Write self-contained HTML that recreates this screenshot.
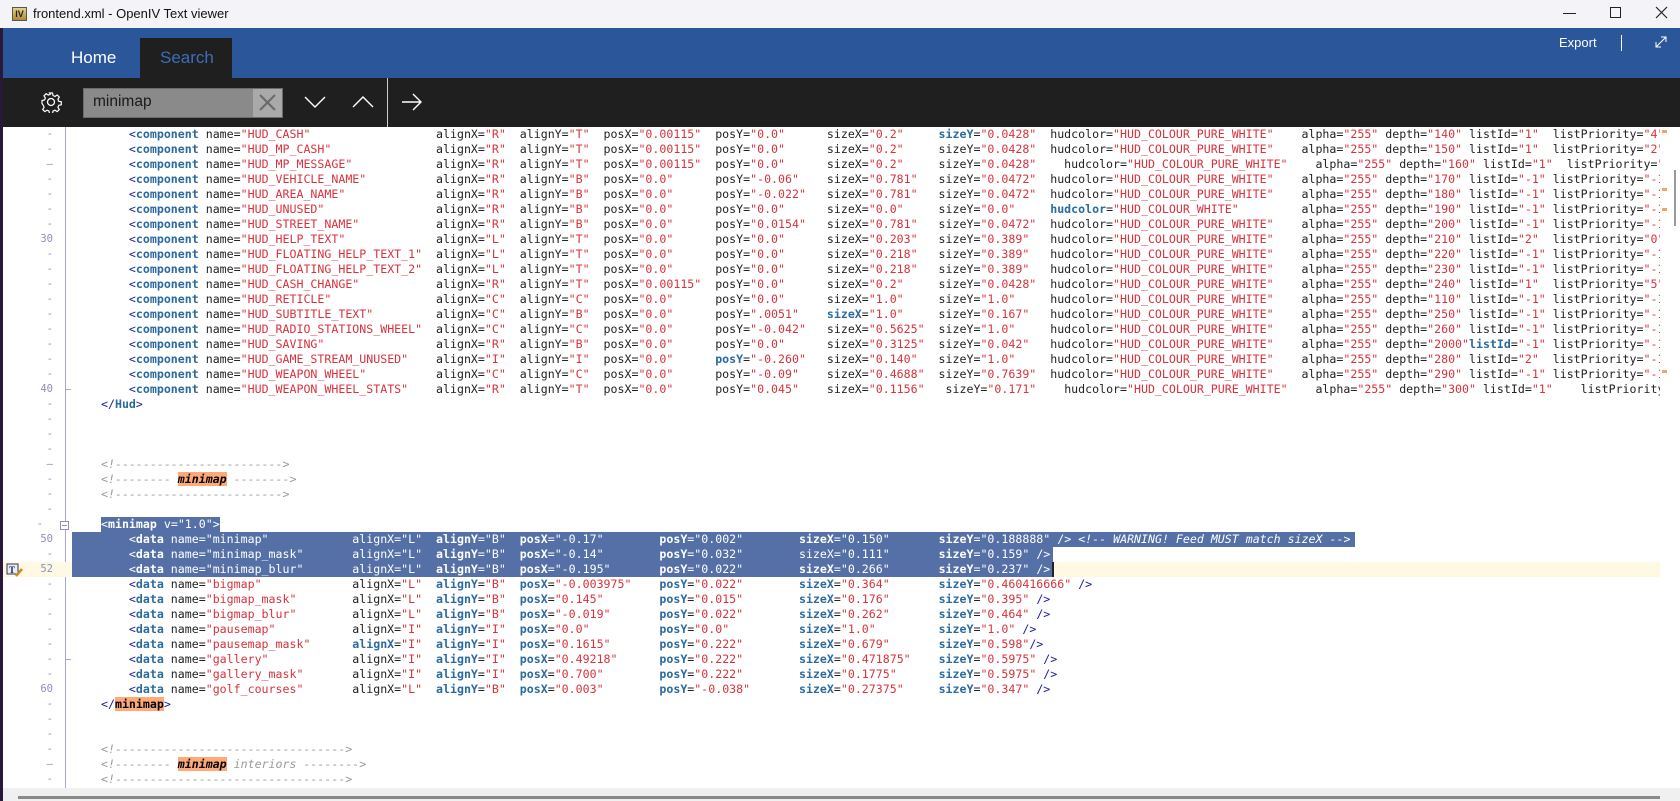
<!DOCTYPE html>
<html><head><meta charset="utf-8">
<style>
*{margin:0;padding:0;box-sizing:border-box}
body{width:1680px;height:801px;overflow:hidden;background:#fff;font-family:"Liberation Sans",sans-serif;position:relative}
#title{position:absolute;left:0;top:0;width:1680px;height:28px;background:#f3f3f8}
#title .txt{position:absolute;left:33px;top:6px;font-size:13px;color:#111}
#ribbon{position:absolute;left:0;top:28px;width:1680px;height:50px;background:#2b579a}
#tool{position:absolute;left:0;top:78px;width:1680px;height:49px;background:#1f1f1f}
#edge{position:absolute;left:0;top:28px;width:3px;height:773px;background:#2a1838}
#code{position:absolute;left:3px;top:127px;width:1657px;height:661px;overflow:hidden;background:#fff;font-family:"DejaVu Sans Mono",monospace;font-size:11.6px}
.r{position:absolute;left:0;height:15px;line-height:15px;width:1657px;white-space:pre}
.g{position:absolute;left:0;width:50px;text-align:right;color:#8d8fbd;font-size:10.5px}
.t{position:absolute;left:98px;color:#222;white-space:pre}
f{display:inline-block;white-space:pre}
.w44{width:44ch}.w12{width:12ch}.w16{width:16ch}.w18{width:18ch}.w17{width:17ch}.w36{width:36ch}.w32{width:32ch}.w20{width:20ch}.w14{width:14ch}.w8{width:8ch}
k{color:#1b1b9c}
e{color:#2a6aa0;font-weight:bold}
v{color:#d8323c}
B{color:#2a6aa0;font-weight:bold}
.cm{color:#9a9a9a;font-style:italic}
.hl{background:#ffa97a;color:#000;font-weight:bold;font-style:italic}
.sel{position:absolute;height:15px;background:#5470a6}
.s, .s k,.s e,.s v,.s B{color:#fff}
#gl{position:absolute;left:62px;top:0;width:1px;height:661px;background:#aaa3d6}
</style></head><body>
<div id="title">
 <div style="position:absolute;left:12px;top:7px;width:15px;height:14px;background:linear-gradient(#e8d08a,#b08a30);border:1px solid #555;font-size:9px;font-weight:bold;line-height:12px;text-align:center;color:#222">IV</div>
 <div class="txt">frontend.xml - OpenIV Text viewer</div>
 <div style="position:absolute;left:1563px;top:13px;width:13px;height:1px;background:#222"></div>
 <div style="position:absolute;left:1610px;top:7px;width:11px;height:11px;border:1px solid #222"></div>
 <svg style="position:absolute;left:1655px;top:6px" width="13" height="13"><path d="M1 1L12 12M12 1L1 12" stroke="#222" stroke-width="1.2"/></svg>
</div>
<div id="ribbon">
 <div style="position:absolute;left:71px;top:20px;font-size:17px;color:#fff">Home</div>
 <div style="position:absolute;left:140px;top:10px;width:92px;height:40px;background:#1f1f1f"></div>
 <div style="position:absolute;left:160px;top:20px;font-size:17px;color:#3a6fb8">Search</div>
 <div style="position:absolute;left:1559px;top:7px;font-size:13px;color:#fff">Export</div>
 <div style="position:absolute;left:1621px;top:7px;width:1px;height:16px;background:#fff"></div>
 <svg style="position:absolute;left:1655px;top:8px" width="12" height="12"><path d="M1 11L11 1M6 1H11V6M1 6V11H6" stroke="#fff" fill="none" stroke-width="1"/></svg>
</div>
<div id="tool">
 <svg style="position:absolute;left:40px;top:13px" width="22" height="22" viewBox="0 0 22 22"><circle cx="11" cy="11" r="3.5" fill="none" stroke="#fff" stroke-width="1.3"/><path d="M9.5 2h3l.5 2.5 2 .9 2.2-1.4 2.1 2.1-1.4 2.2.9 2 2.5.5v3l-2.5.5-.9 2 1.4 2.2-2.1 2.1-2.2-1.4-2 .9-.5 2.5h-3l-.5-2.5-2-.9-2.2 1.4-2.1-2.1 1.4-2.2-.9-2L2 12.5v-3l2.5-.5.9-2L4 4.8 6.1 2.7l2.2 1.4 2-.9z" fill="none" stroke="#fff" stroke-width="1.2"/></svg>
 <div style="position:absolute;left:83px;top:10px;width:200px;height:30px;background:#8a8a8a;border:1px solid #6b6b6b"></div>
 <div style="position:absolute;left:93px;top:15px;font-size:15.5px;color:#1a1a1a">minimap</div>
 <div style="position:absolute;left:253px;top:11px;width:29px;height:28px;background:#a9a9a9"></div>
 <svg style="position:absolute;left:258px;top:15px" width="19" height="19"><path d="M2 2L17 17M17 2L2 17" stroke="#6a6a6a" stroke-width="2.2"/></svg>
 <svg style="position:absolute;left:304px;top:17px" width="22" height="14"><path d="M1 2L11 12L21 2" stroke="#fff" fill="none" stroke-width="1.4"/></svg>
 <svg style="position:absolute;left:352px;top:17px" width="22" height="14"><path d="M1 12L11 2L21 12" stroke="#fff" fill="none" stroke-width="1.4"/></svg>
 <div style="position:absolute;left:387px;top:0;width:1px;height:49px;background:#ccc"></div>
 <svg style="position:absolute;left:401px;top:14px" width="22" height="20"><path d="M1 10H20M12 2L20 10L12 18" stroke="#fff" fill="none" stroke-width="1.4"/></svg>
</div>
<div id="edge"></div>

<div id="code">
<div id="gl"></div>
<div style="position:absolute;left:0;top:435px;width:1657px;height:15px;background:#fff8e3"></div>
<div class="sel" style="left:98px;top:390px;width:119px"></div>
<div class="sel" style="left:69px;top:405px;width:1283px"></div>
<div class="sel" style="left:69px;top:420px;width:981px"></div>
<div class="sel" style="left:69px;top:435px;width:981px"></div>
<div style="position:absolute;left:1049px;top:435px;width:2px;height:15px;background:#222"></div>
<div style="position:absolute;left:57px;top:394px;width:9px;height:9px;border:1px solid #8d8fbd;background:#fff"></div>
<div style="position:absolute;left:59px;top:398px;width:5px;height:1px;background:#8d8fbd"></div>
<div style="position:absolute;left:62px;top:262px;width:6px;height:1px;background:#aaa3d6"></div>
<div style="position:absolute;left:62px;top:532px;width:6px;height:1px;background:#aaa3d6"></div>
<svg style="position:absolute;left:3px;top:436px" width="18" height="14"><rect x="1" y="1" width="11" height="10" fill="#e8eef8" stroke="#335"/><text x="3" y="10" font-size="9" font-family="Liberation Serif" font-weight="bold" fill="#224">T</text><path d="M10 13L16 6" stroke="#d08a20" stroke-width="2.5"/></svg>

<div class="r" style="top:0"><span class="g">-</span><span class="t">    <f class="w44"><k>&lt;</k><e>component</e> name=<v>"HUD_CASH"</v></f><f class="w12">alignX=<v>"R"</v></f><f class="w12">alignY=<v>"T"</v></f><f class="w16">posX=<v>"0.00115"</v></f><f class="w16">posY=<v>"0.0"</v></f><f class="w16">sizeX=<v>"0.2"</v></f><f class="w16"><B>sizeY</B>=<v>"0.0428"</v></f><f class="w36">hudcolor=<v>"HUD_COLOUR_PURE_WHITE"</v></f><f class="w12">alpha=<v>"255"</v></f><f class="w12">depth=<v>"140"</v></f><f class="w12">listId=<v>"1"</v></f>listPriority=<v>"4"</v></span></div>
<div class="r" style="top:15px"><span class="g">-</span><span class="t">    <f class="w44"><k>&lt;</k><e>component</e> name=<v>"HUD_MP_CASH"</v></f><f class="w12">alignX=<v>"R"</v></f><f class="w12">alignY=<v>"T"</v></f><f class="w16">posX=<v>"0.00115"</v></f><f class="w16">posY=<v>"0.0"</v></f><f class="w16">sizeX=<v>"0.2"</v></f><f class="w16">sizeY=<v>"0.0428"</v></f><f class="w36">hudcolor=<v>"HUD_COLOUR_PURE_WHITE"</v></f><f class="w12">alpha=<v>"255"</v></f><f class="w12">depth=<v>"150"</v></f><f class="w12">listId=<v>"1"</v></f>listPriority=<v>"2"</v></span></div>
<div class="r" style="top:30px"><span class="g">–</span><span class="t">    <f class="w44"><k>&lt;</k><e>component</e> name=<v>"HUD_MP_MESSAGE"</v></f><f class="w12">alignX=<v>"R"</v></f><f class="w12">alignY=<v>"T"</v></f><f class="w16">posX=<v>"0.00115"</v></f><f class="w16">posY=<v>"0.0"</v></f><f class="w16">sizeX=<v>"0.2"</v></f><f class="w18">sizeY=<v>"0.0428"</v></f><f class="w36">hudcolor=<v>"HUD_COLOUR_PURE_WHITE"</v></f><f class="w12">alpha=<v>"255"</v></f><f class="w12">depth=<v>"160"</v></f><f class="w12">listId=<v>"1"</v></f>listPriority=<v>"</v></span></div>
<div class="r" style="top:45px"><span class="g">-</span><span class="t">    <f class="w44"><k>&lt;</k><e>component</e> name=<v>"HUD_VEHICLE_NAME"</v></f><f class="w12">alignX=<v>"R"</v></f><f class="w12">alignY=<v>"B"</v></f><f class="w16">posX=<v>"0.0"</v></f><f class="w16">posY=<v>"-0.06"</v></f><f class="w16">sizeX=<v>"0.781"</v></f><f class="w16">sizeY=<v>"0.0472"</v></f><f class="w36">hudcolor=<v>"HUD_COLOUR_PURE_WHITE"</v></f><f class="w12">alpha=<v>"255"</v></f><f class="w12">depth=<v>"170"</v></f><f class="w12">listId=<v>"-1"</v></f>listPriority=<v>"-1"</v></span></div>
<div class="r" style="top:60px"><span class="g">-</span><span class="t">    <f class="w44"><k>&lt;</k><e>component</e> name=<v>"HUD_AREA_NAME"</v></f><f class="w12">alignX=<v>"R"</v></f><f class="w12">alignY=<v>"B"</v></f><f class="w16">posX=<v>"0.0"</v></f><f class="w16">posY=<v>"-0.022"</v></f><f class="w16">sizeX=<v>"0.781"</v></f><f class="w16">sizeY=<v>"0.0472"</v></f><f class="w36">hudcolor=<v>"HUD_COLOUR_PURE_WHITE"</v></f><f class="w12">alpha=<v>"255"</v></f><f class="w12">depth=<v>"180"</v></f><f class="w12">listId=<v>"-1"</v></f>listPriority=<v>"-1"</v></span></div>
<div class="r" style="top:75px"><span class="g">-</span><span class="t">    <f class="w44"><k>&lt;</k><e>component</e> name=<v>"HUD_UNUSED"</v></f><f class="w12">alignX=<v>"R"</v></f><f class="w12">alignY=<v>"B"</v></f><f class="w16">posX=<v>"0.0"</v></f><f class="w16">posY=<v>"0.0"</v></f><f class="w16">sizeX=<v>"0.0"</v></f><f class="w16">sizeY=<v>"0.0"</v></f><f class="w36"><B>hudcolor</B>=<v>"HUD_COLOUR_WHITE"</v></f><f class="w12">alpha=<v>"255"</v></f><f class="w12">depth=<v>"190"</v></f><f class="w12">listId=<v>"-1"</v></f>listPriority=<v>"-1"</v></span></div>
<div class="r" style="top:90px"><span class="g">-</span><span class="t">    <f class="w44"><k>&lt;</k><e>component</e> name=<v>"HUD_STREET_NAME"</v></f><f class="w12">alignX=<v>"R"</v></f><f class="w12">alignY=<v>"B"</v></f><f class="w16">posX=<v>"0.0"</v></f><f class="w16">posY=<v>"0.0154"</v></f><f class="w16">sizeX=<v>"0.781"</v></f><f class="w16">sizeY=<v>"0.0472"</v></f><f class="w36">hudcolor=<v>"HUD_COLOUR_PURE_WHITE"</v></f><f class="w12">alpha=<v>"255"</v></f><f class="w12">depth=<v>"200"</v></f><f class="w12">listId=<v>"-1"</v></f>listPriority=<v>"-1"</v></span></div>
<div class="r" style="top:105px"><span class="g">30</span><span class="t">    <f class="w44"><k>&lt;</k><e>component</e> name=<v>"HUD_HELP_TEXT"</v></f><f class="w12">alignX=<v>"L"</v></f><f class="w12">alignY=<v>"T"</v></f><f class="w16">posX=<v>"0.0"</v></f><f class="w16">posY=<v>"0.0"</v></f><f class="w16">sizeX=<v>"0.203"</v></f><f class="w16">sizeY=<v>"0.389"</v></f><f class="w36">hudcolor=<v>"HUD_COLOUR_PURE_WHITE"</v></f><f class="w12">alpha=<v>"255"</v></f><f class="w12">depth=<v>"210"</v></f><f class="w12">listId=<v>"2"</v></f>listPriority=<v>"0"</v></span></div>
<div class="r" style="top:120px"><span class="g">-</span><span class="t">    <f class="w44"><k>&lt;</k><e>component</e> name=<v>"HUD_FLOATING_HELP_TEXT_1"</v></f><f class="w12">alignX=<v>"L"</v></f><f class="w12">alignY=<v>"T"</v></f><f class="w16">posX=<v>"0.0"</v></f><f class="w16">posY=<v>"0.0"</v></f><f class="w16">sizeX=<v>"0.218"</v></f><f class="w16">sizeY=<v>"0.389"</v></f><f class="w36">hudcolor=<v>"HUD_COLOUR_PURE_WHITE"</v></f><f class="w12">alpha=<v>"255"</v></f><f class="w12">depth=<v>"220"</v></f><f class="w12">listId=<v>"-1"</v></f>listPriority=<v>"-1"</v></span></div>
<div class="r" style="top:135px"><span class="g">-</span><span class="t">    <f class="w44"><k>&lt;</k><e>component</e> name=<v>"HUD_FLOATING_HELP_TEXT_2"</v></f><f class="w12">alignX=<v>"L"</v></f><f class="w12">alignY=<v>"T"</v></f><f class="w16">posX=<v>"0.0"</v></f><f class="w16">posY=<v>"0.0"</v></f><f class="w16">sizeX=<v>"0.218"</v></f><f class="w16">sizeY=<v>"0.389"</v></f><f class="w36">hudcolor=<v>"HUD_COLOUR_PURE_WHITE"</v></f><f class="w12">alpha=<v>"255"</v></f><f class="w12">depth=<v>"230"</v></f><f class="w12">listId=<v>"-1"</v></f>listPriority=<v>"-1"</v></span></div>
<div class="r" style="top:150px"><span class="g">-</span><span class="t">    <f class="w44"><k>&lt;</k><e>component</e> name=<v>"HUD_CASH_CHANGE"</v></f><f class="w12">alignX=<v>"R"</v></f><f class="w12">alignY=<v>"T"</v></f><f class="w16">posX=<v>"0.00115"</v></f><f class="w16">posY=<v>"0.0"</v></f><f class="w16">sizeX=<v>"0.2"</v></f><f class="w16">sizeY=<v>"0.0428"</v></f><f class="w36">hudcolor=<v>"HUD_COLOUR_PURE_WHITE"</v></f><f class="w12">alpha=<v>"255"</v></f><f class="w12">depth=<v>"240"</v></f><f class="w12">listId=<v>"1"</v></f>listPriority=<v>"5"</v></span></div>
<div class="r" style="top:165px"><span class="g">-</span><span class="t">    <f class="w44"><k>&lt;</k><e>component</e> name=<v>"HUD_RETICLE"</v></f><f class="w12">alignX=<v>"C"</v></f><f class="w12">alignY=<v>"C"</v></f><f class="w16">posX=<v>"0.0"</v></f><f class="w16">posY=<v>"0.0"</v></f><f class="w16">sizeX=<v>"1.0"</v></f><f class="w16">sizeY=<v>"1.0"</v></f><f class="w36">hudcolor=<v>"HUD_COLOUR_PURE_WHITE"</v></f><f class="w12">alpha=<v>"255"</v></f><f class="w12">depth=<v>"110"</v></f><f class="w12">listId=<v>"-1"</v></f>listPriority=<v>"-1"</v></span></div>
<div class="r" style="top:180px"><span class="g">-</span><span class="t">    <f class="w44"><k>&lt;</k><e>component</e> name=<v>"HUD_SUBTITLE_TEXT"</v></f><f class="w12">alignX=<v>"C"</v></f><f class="w12">alignY=<v>"B"</v></f><f class="w16">posX=<v>"0.0"</v></f><f class="w16">posY=<v>".0051"</v></f><f class="w16"><B>sizeX</B>=<v>"1.0"</v></f><f class="w16">sizeY=<v>"0.167"</v></f><f class="w36">hudcolor=<v>"HUD_COLOUR_PURE_WHITE"</v></f><f class="w12">alpha=<v>"255"</v></f><f class="w12">depth=<v>"250"</v></f><f class="w12">listId=<v>"-1"</v></f>listPriority=<v>"-1"</v></span></div>
<div class="r" style="top:195px"><span class="g">-</span><span class="t">    <f class="w44"><k>&lt;</k><e>component</e> name=<v>"HUD_RADIO_STATIONS_WHEEL"</v></f><f class="w12">alignX=<v>"C"</v></f><f class="w12">alignY=<v>"C"</v></f><f class="w16">posX=<v>"0.0"</v></f><f class="w16">posY=<v>"-0.042"</v></f><f class="w16">sizeX=<v>"0.5625"</v></f><f class="w16">sizeY=<v>"1.0"</v></f><f class="w36">hudcolor=<v>"HUD_COLOUR_PURE_WHITE"</v></f><f class="w12">alpha=<v>"255"</v></f><f class="w12">depth=<v>"260"</v></f><f class="w12">listId=<v>"-1"</v></f>listPriority=<v>"-1"</v></span></div>
<div class="r" style="top:210px"><span class="g">-</span><span class="t">    <f class="w44"><k>&lt;</k><e>component</e> name=<v>"HUD_SAVING"</v></f><f class="w12">alignX=<v>"R"</v></f><f class="w12">alignY=<v>"B"</v></f><f class="w16">posX=<v>"0.0"</v></f><f class="w16">posY=<v>"0.0"</v></f><f class="w16">sizeX=<v>"0.3125"</v></f><f class="w16">sizeY=<v>"0.042"</v></f><f class="w36">hudcolor=<v>"HUD_COLOUR_PURE_WHITE"</v></f><f class="w12">alpha=<v>"255"</v></f><f class="w12">depth=<v>"2000"</v></f><f class="w12"><B>listId</B>=<v>"-1"</v></f>listPriority=<v>"-1"</v></span></div>
<div class="r" style="top:225px"><span class="g">-</span><span class="t">    <f class="w44"><k>&lt;</k><e>component</e> name=<v>"HUD_GAME_STREAM_UNUSED"</v></f><f class="w12">alignX=<v>"I"</v></f><f class="w12">alignY=<v>"I"</v></f><f class="w16">posX=<v>"0.0"</v></f><f class="w16"><B>posY</B>=<v>"-0.260"</v></f><f class="w16">sizeX=<v>"0.140"</v></f><f class="w16">sizeY=<v>"1.0"</v></f><f class="w36">hudcolor=<v>"HUD_COLOUR_PURE_WHITE"</v></f><f class="w12">alpha=<v>"255"</v></f><f class="w12">depth=<v>"280"</v></f><f class="w12">listId=<v>"2"</v></f>listPriority=<v>"-1"</v></span></div>
<div class="r" style="top:240px"><span class="g">-</span><span class="t">    <f class="w44"><k>&lt;</k><e>component</e> name=<v>"HUD_WEAPON_WHEEL"</v></f><f class="w12">alignX=<v>"C"</v></f><f class="w12">alignY=<v>"C"</v></f><f class="w16">posX=<v>"0.0"</v></f><f class="w16">posY=<v>"-0.09"</v></f><f class="w16">sizeX=<v>"0.4688"</v></f><f class="w16">sizeY=<v>"0.7639"</v></f><f class="w36">hudcolor=<v>"HUD_COLOUR_PURE_WHITE"</v></f><f class="w12">alpha=<v>"255"</v></f><f class="w12">depth=<v>"290"</v></f><f class="w12">listId=<v>"-1"</v></f>listPriority=<v>"-1"</v></span></div>
<div class="r" style="top:255px"><span class="g">40</span><span class="t">    <f class="w44"><k>&lt;</k><e>component</e> name=<v>"HUD_WEAPON_WHEEL_STATS"</v></f><f class="w12">alignX=<v>"R"</v></f><f class="w12">alignY=<v>"T"</v></f><f class="w16">posX=<v>"0.0"</v></f><f class="w16">posY=<v>"0.045"</v></f><f class="w17">sizeX=<v>"0.1156"</v></f><f class="w17">sizeY=<v>"0.171"</v></f><f class="w36">hudcolor=<v>"HUD_COLOUR_PURE_WHITE"</v></f><f class="w12">alpha=<v>"255"</v></f><f class="w12">depth=<v>"300"</v></f><f class="w14">listId=<v>"1"</v></f>listPriority=<v>"1"</v></span></div>
<div class="r" style="top:270px"><span class="g">-</span><span class="t"><k>&lt;/</k><e>Hud</e><k>&gt;</k></span></div>
<div class="r" style="top:285px"><span class="g">-</span></div>
<div class="r" style="top:300px"><span class="g">-</span></div>
<div class="r" style="top:315px"><span class="g">-</span></div>
<div class="r" style="top:330px"><span class="g">–</span><span class="t cm">&lt;!------------------------&gt;</span></div>
<div class="r" style="top:345px"><span class="g">-</span><span class="t cm">&lt;!-------- <span class="hl">minimap</span> --------&gt;</span></div>
<div class="r" style="top:360px"><span class="g">-</span><span class="t cm">&lt;!------------------------&gt;</span></div>
<div class="r" style="top:375px"><span class="g">-</span></div>
<div class="r" style="top:390px"><span class="g" style="width:40px">-</span><span class="t s"><k>&lt;</k><e>minimap</e> v=<v>"1.0"</v><k>&gt;</k></span></div>
<div class="r" style="top:405px"><span class="g">50</span><span class="t s">    <f class="w32"><k>&lt;</k><e>data</e> name=<v>"minimap"</v></f><f class="w12">alignX=<v>"L"</v></f><f class="w12"><B>alignY</B>=<v>"B"</v></f><f class="w20"><B>posX</B>=<v>"-0.17"</v></f><f class="w20"><B>posY</B>=<v>"0.002"</v></f><f class="w20"><B>sizeX</B>=<v>"0.150"</v></f><B>sizeY</B>=<v>"0.188888"</v> <k>/&gt;</k> <span style="font-style:italic">&lt;!-- WARNING! Feed MUST match sizeX --&gt;</span></span></div>
<div class="r" style="top:420px"><span class="g">-</span><span class="t s">    <f class="w32"><k>&lt;</k><e>data</e> name=<v>"minimap_mask"</v></f><f class="w12">alignX=<v>"L"</v></f><f class="w12"><B>alignY</B>=<v>"B"</v></f><f class="w20"><B>posX</B>=<v>"-0.14"</v></f><f class="w20"><B>posY</B>=<v>"0.032"</v></f><f class="w20">sizeX=<v>"0.111"</v></f><B>sizeY</B>=<v>"0.159"</v> <k>/&gt;</k></span></div>
<div class="r" style="top:435px"><span class="g">52</span><span class="t s">    <f class="w32"><k>&lt;</k><e>data</e> name=<v>"minimap_blur"</v></f><f class="w12">alignX=<v>"L"</v></f><f class="w12"><B>alignY</B>=<v>"B"</v></f><f class="w20"><B>posX</B>=<v>"-0.195"</v></f><f class="w20"><B>posY</B>=<v>"0.022"</v></f><f class="w20"><B>sizeX</B>=<v>"0.266"</v></f><B>sizeY</B>=<v>"0.237"</v> <k>/&gt;</k></span></div>
<div class="r" style="top:450px"><span class="g">-</span><span class="t">    <f class="w32"><k>&lt;</k><e>data</e> name=<v>"bigmap"</v></f><f class="w12">alignX=<v>"L"</v></f><f class="w12"><B>alignY</B>=<v>"B"</v></f><f class="w20"><B>posX</B>=<v>"-0.003975"</v></f><f class="w20"><B>posY</B>=<v>"0.022"</v></f><f class="w20"><B>sizeX</B>=<v>"0.364"</v></f><B>sizeY</B>=<v>"0.460416666"</v> <k>/&gt;</k></span></div>
<div class="r" style="top:465px"><span class="g">-</span><span class="t">    <f class="w32"><k>&lt;</k><e>data</e> name=<v>"bigmap_mask"</v></f><f class="w12">alignX=<v>"L"</v></f><f class="w12"><B>alignY</B>=<v>"B"</v></f><f class="w20"><B>posX</B>=<v>"0.145"</v></f><f class="w20"><B>posY</B>=<v>"0.015"</v></f><f class="w20"><B>sizeX</B>=<v>"0.176"</v></f><B>sizeY</B>=<v>"0.395"</v> <k>/&gt;</k></span></div>
<div class="r" style="top:480px"><span class="g">-</span><span class="t">    <f class="w32"><k>&lt;</k><e>data</e> name=<v>"bigmap_blur"</v></f><f class="w12">alignX=<v>"L"</v></f><f class="w12"><B>alignY</B>=<v>"B"</v></f><f class="w20"><B>posX</B>=<v>"-0.019"</v></f><f class="w20"><B>posY</B>=<v>"0.022"</v></f><f class="w20"><B>sizeX</B>=<v>"0.262"</v></f><B>sizeY</B>=<v>"0.464"</v> <k>/&gt;</k></span></div>
<div class="r" style="top:495px"><span class="g">-</span><span class="t">    <f class="w32"><k>&lt;</k><e>data</e> name=<v>"pausemap"</v></f><f class="w12">alignX=<v>"I"</v></f><f class="w12"><B>alignY</B>=<v>"I"</v></f><f class="w20"><B>posX</B>=<v>"0.0"</v></f><f class="w20"><B>posY</B>=<v>"0.0"</v></f><f class="w20"><B>sizeX</B>=<v>"1.0"</v></f><B>sizeY</B>=<v>"1.0"</v> <k>/&gt;</k></span></div>
<div class="r" style="top:510px"><span class="g">-</span><span class="t">    <f class="w32"><k>&lt;</k><e>data</e> name=<v>"pausemap_mask"</v></f><f class="w12"><B>alignX</B>=<v>"I"</v></f><f class="w12"><B>alignY</B>=<v>"I"</v></f><f class="w20"><B>posX</B>=<v>"0.1615"</v></f><f class="w20"><B>posY</B>=<v>"0.222"</v></f><f class="w20"><B>sizeX</B>=<v>"0.679"</v></f><B>sizeY</B>=<v>"0.598"</v><k>/&gt;</k></span></div>
<div class="r" style="top:525px"><span class="g">-</span><span class="t">    <f class="w32"><k>&lt;</k><e>data</e> name=<v>"gallery"</v></f><f class="w12">alignX=<v>"I"</v></f><f class="w12"><B>alignY</B>=<v>"I"</v></f><f class="w20"><B>posX</B>=<v>"0.49218"</v></f><f class="w20"><B>posY</B>=<v>"0.222"</v></f><f class="w20"><B>sizeX</B>=<v>"0.471875"</v></f><B>sizeY</B>=<v>"0.5975"</v> <k>/&gt;</k></span></div>
<div class="r" style="top:540px"><span class="g">-</span><span class="t">    <f class="w32"><k>&lt;</k><e>data</e> name=<v>"gallery_mask"</v></f><f class="w12">alignX=<v>"I"</v></f><f class="w12"><B>alignY</B>=<v>"I"</v></f><f class="w20"><B>posX</B>=<v>"0.700"</v></f><f class="w20"><B>posY</B>=<v>"0.222"</v></f><f class="w20"><B>sizeX</B>=<v>"0.1775"</v></f><B>sizeY</B>=<v>"0.5975"</v> <k>/&gt;</k></span></div>
<div class="r" style="top:555px"><span class="g">60</span><span class="t">    <f class="w32"><k>&lt;</k><e>data</e> name=<v>"golf_courses"</v></f><f class="w12">alignX=<v>"L"</v></f><f class="w12"><B>alignY</B>=<v>"B"</v></f><f class="w20"><B>posX</B>=<v>"0.003"</v></f><f class="w20"><B>posY</B>=<v>"-0.038"</v></f><f class="w20"><B>sizeX</B>=<v>"0.27375"</v></f><B>sizeY</B>=<v>"0.347"</v> <k>/&gt;</k></span></div>
<div class="r" style="top:570px"><span class="g">-</span><span class="t"><k>&lt;/</k><span class="hl" style="font-style:normal">minimap</span><k>&gt;</k></span></div>
<div class="r" style="top:585px"><span class="g">-</span></div>
<div class="r" style="top:600px"><span class="g">-</span></div>
<div class="r" style="top:615px"><span class="g">-</span><span class="t cm">&lt;!---------------------------------&gt;</span></div>
<div class="r" style="top:630px"><span class="g">–</span><span class="t cm">&lt;!-------- <span class="hl">minimap</span> interiors --------&gt;</span></div>
<div class="r" style="top:645px"><span class="g">-</span><span class="t cm">&lt;!---------------------------------&gt;</span></div>
</div>
<div style="position:absolute;left:1660px;top:127px;width:20px;height:661px;background:#fff"></div>
<div style="position:absolute;left:1674px;top:170px;width:2px;height:56px;background:#9a9a9a"></div>
<div style="position:absolute;left:1662px;top:130px;width:5px;height:3px;background:#ffa060"></div>
<div style="position:absolute;left:1662px;top:188px;width:5px;height:3px;background:#ffa060"></div>
<div style="position:absolute;left:1662px;top:208px;width:5px;height:3px;background:#ffa060"></div>
<div style="position:absolute;left:1662px;top:370px;width:5px;height:3px;background:#ffa060"></div>
<div style="position:absolute;left:3px;top:788px;width:1677px;height:13px;background:#f0f0f0"></div>
<div style="position:absolute;left:18px;top:796px;width:1642px;height:3px;background:#8a8a8a"></div>
</body></html>
